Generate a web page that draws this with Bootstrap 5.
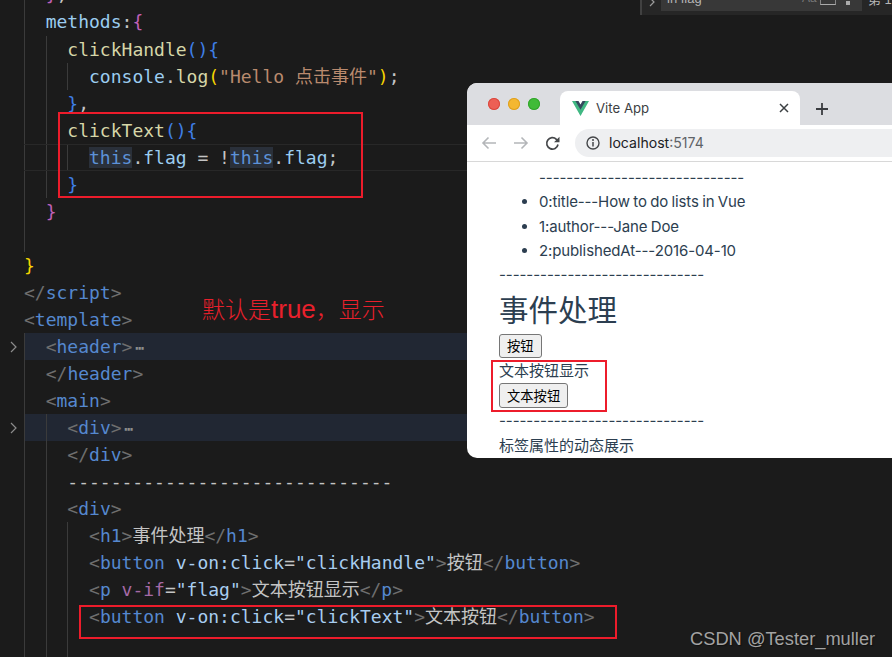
<!DOCTYPE html>
<html lang="zh">
<head>
<meta charset="utf-8">
<title>Vite App</title>
<link href="https://cdn.jsdelivr.net/npm/bootstrap@5.3.0/dist/css/bootstrap.min.css" rel="stylesheet">
<style>
html,body{height:657px;overflow:hidden;background:#1b1b1b;}
.editor{margin-top:-18.6px;font:18px/27.05px "DejaVu Sans Mono","Noto Sans CJK SC",monospace;color:#c4c4c4;}
.ln{height:27.05px;white-space:pre;}
.gut{width:24px;flex:none;}
.gut svg{display:block;margin:8px 0 0 10px;}
.cd{flex:1 1 auto;--g:#3b3b3b;}
.g1{background:linear-gradient(var(--g),var(--g)) 0 0/1px 100% no-repeat;}
.g2{background:linear-gradient(var(--g),var(--g)) 0 0/1px 100% no-repeat,linear-gradient(var(--g),var(--g)) 22px 0/1px 100% no-repeat;}
.g3{background:linear-gradient(var(--g),var(--g)) 0 0/1px 100% no-repeat,linear-gradient(var(--g),var(--g)) 22px 0/1px 100% no-repeat,linear-gradient(var(--g),var(--g)) 43px 0/1px 100% no-repeat;}
.fold{background-color:#212733;}
.cur{box-shadow:inset 0 1px 0 #282828,inset 0 -1px 0 #282828;}
.k{color:#9bcdf0}.f{color:#d6d6a8}.bb{color:#3f7fe6}.pk{color:#c060b8}.yl{color:#f5d400}
.st{color:#b98a6e}.tg{color:#5588cf}.br{color:#6e6e6e}.at{color:#a8cdf0}.vi{color:#a66aa6}
.hl{background:#2a303a;color:#5d92d8;}
.dots{color:#8c8c8c;font-size:15px;font-weight:700;margin-left:3px;}
.note{left:202px;top:292px;color:#e8202c;font:300 23px/34px "Liberation Sans","Noto Sans CJK SC",sans-serif;white-space:pre;}
.note span{font-size:26px;}
.rbox{border:2px solid #ed1c2b;}
.r1{left:58px;top:112px;width:305px;height:86px;}
.r2{left:79px;top:605px;width:538px;height:34px;}
.r3{left:491px;top:360px;width:116px;height:52px;z-index:5;}
.mark-wm{left:690px;top:628px;color:#a3a3a3;font:18.3px/22px "Liberation Sans",sans-serif;text-shadow:1px 1px 1px #0006;}
.findw{left:640px;top:0;width:252px;height:15px;background:#262626;border-left:2px solid #414141;color:#9a9a9a;font:12px/12px "Liberation Sans","Noto Sans CJK SC",sans-serif;}
.findin{left:19px;top:0;width:201px;height:11px;background:#383838;}
.findtx{left:6px;top:-7px;font-size:13px;color:#b5b5b5;white-space:pre;}
.fa{left:141px;top:-8px;color:#777;}
.fb{left:159px;top:0;width:16px;height:5px;border-bottom:1px solid #aaa;border-left:1px solid #888;border-right:1px solid #888;}
.fc{left:185px;top:1px;width:4px;height:4px;background:#aaa;}
.fd{left:226px;top:-6px;font-size:13px;color:#b5b5b5;white-space:pre;}
.fchev{left:7px;top:-3px;}
.win{left:467px;top:83px;width:425px;height:375px;background:#fff;border-radius:10px 0 0 10px;}
.tbar{height:42px;background:#dcdde1;padding:8px 0 0 21px;}
.lamp{width:12px;height:12px;border-radius:50%;margin:7px 8px 0 0;}
.l1{background:#ed5f55;box-shadow:inset 0 0 0 1px #d9493f;}
.l2{background:#f4b731;box-shadow:inset 0 0 0 1px #dea021;}
.l3{background:#40bb38;box-shadow:inset 0 0 0 1px #33a52c;}
.tabx{width:240px;height:34px;margin-left:12px;background:#fff;border-radius:8px 8px 0 0;padding:0 11px 0 12px;font:13.2px/34px "Inter","Liberation Sans",sans-serif;color:#3c4043;}
.tabtitle{margin-left:7px;}
.plus{margin-left:15px;margin-top:11px;}
.tool{height:36px;padding:0 0 0 14px;}
.nav1{margin-right:16px;}
.nav3{margin-right:15px;}
.omni{height:28px;background:#eeeff1;border-radius:14px 0 0 14px;padding-left:11px;font:14.1px/28px "Inter","Liberation Sans",sans-serif;color:#202124;}
.omni span{color:#5f6368;}
.omni svg{margin-right:9px;}
.pagew{border-top:1px solid #d8d8d8;padding:4px 0 0 32px;font:15px/24.3px "Inter","Noto Sans CJK SC",sans-serif;color:#2c3e50;height:297px;}
.dashx{letter-spacing:-.06px;}
.rows{padding-left:40px;}
.rows ul{margin:0;padding-left:0;letter-spacing:-.12px;word-spacing:-.7px;}
.h1x{font:400 29.5px/47px "Inter","Noto Sans CJK SC",sans-serif;margin:0;color:#2c3e50;}
.natbtn{display:block;background:#efefef;border:1px solid #767676;border-radius:3px;color:#000;font:13.3px/16px "Inter","Noto Sans CJK SC",sans-serif;padding:3px 7px;height:24px;}
.natbtn2{height:25px;margin-bottom:1px;}
.txt1{height:25px;line-height:26px;}
</style>
</head>
<body class="m-0 position-relative">
<div class="editor">
<div class="ln d-flex"><span class="gut"></span><span class="cd g1">  <span class="pk">}</span>,</span></div>
<div class="ln d-flex"><span class="gut"></span><span class="cd g1">  <span class="k">methods</span>:<span class="pk">{</span></span></div>
<div class="ln d-flex"><span class="gut"></span><span class="cd g2">    <span class="f">clickHandle</span><span class="bb">(){</span></span></div>
<div class="ln d-flex"><span class="gut"></span><span class="cd g3">      <span class="k">console</span>.<span class="f">log</span><span class="yl">(</span><span class="st">"Hello 点击事件"</span><span class="yl">)</span>;</span></div>
<div class="ln d-flex"><span class="gut"></span><span class="cd g2">    <span class="bb">}</span>,</span></div>
<div class="ln d-flex"><span class="gut"></span><span class="cd g2">    <span class="f">clickText</span><span class="bb">(){</span></span></div>
<div class="ln d-flex"><span class="gut"></span><span class="cd g3 cur">      <span class="hl">this</span>.<span class="k">flag</span> = !<span class="hl">this</span>.<span class="k">flag</span>;</span></div>
<div class="ln d-flex"><span class="gut"></span><span class="cd g2">    <span class="bb">}</span></span></div>
<div class="ln d-flex"><span class="gut"></span><span class="cd g1">  <span class="pk">}</span></span></div>
<div class="ln d-flex"><span class="gut"></span><span class="cd g1"> </span></div>
<div class="ln d-flex"><span class="gut"></span><span class="cd"><span class="yl">}</span></span></div>
<div class="ln d-flex"><span class="gut"></span><span class="cd"><span class="br">&lt;/</span><span class="tg">script</span><span class="br">&gt;</span></span></div>
<div class="ln d-flex"><span class="gut"></span><span class="cd"><span class="br">&lt;</span><span class="tg">template</span><span class="br">&gt;</span></span></div>
<div class="ln d-flex"><span class="gut"><svg width="7" height="12" viewBox="0 0 7 12"><path d="M1 1l5 5-5 5" fill="none" stroke="#8c8c8c" stroke-width="1.2"/></svg></span><span class="cd g1 fold">  <span class="br">&lt;</span><span class="tg">header</span><span class="br">&gt;</span><span class="dots">⋯</span></span></div>
<div class="ln d-flex"><span class="gut"></span><span class="cd g1">  <span class="br">&lt;/</span><span class="tg">header</span><span class="br">&gt;</span></span></div>
<div class="ln d-flex"><span class="gut"></span><span class="cd g1">  <span class="br">&lt;</span><span class="tg">main</span><span class="br">&gt;</span></span></div>
<div class="ln d-flex"><span class="gut"><svg width="7" height="12" viewBox="0 0 7 12"><path d="M1 1l5 5-5 5" fill="none" stroke="#8c8c8c" stroke-width="1.2"/></svg></span><span class="cd g2 fold">    <span class="br">&lt;</span><span class="tg">div</span><span class="br">&gt;</span><span class="dots">⋯</span></span></div>
<div class="ln d-flex"><span class="gut"></span><span class="cd g2">    <span class="br">&lt;/</span><span class="tg">div</span><span class="br">&gt;</span></span></div>
<div class="ln d-flex"><span class="gut"></span><span class="cd g2">    ------------------------------</span></div>
<div class="ln d-flex"><span class="gut"></span><span class="cd g2">    <span class="br">&lt;</span><span class="tg">div</span><span class="br">&gt;</span></span></div>
<div class="ln d-flex"><span class="gut"></span><span class="cd g3">      <span class="br">&lt;</span><span class="tg">h1</span><span class="br">&gt;</span>事件处理<span class="br">&lt;/</span><span class="tg">h1</span><span class="br">&gt;</span></span></div>
<div class="ln d-flex"><span class="gut"></span><span class="cd g3">      <span class="br">&lt;</span><span class="tg">button</span> <span class="at">v-on:click</span>=<span class="at">"clickHandle"</span><span class="br">&gt;</span>按钮<span class="br">&lt;/</span><span class="tg">button</span><span class="br">&gt;</span></span></div>
<div class="ln d-flex"><span class="gut"></span><span class="cd g3">      <span class="br">&lt;</span><span class="tg">p</span> <span class="vi">v-if</span>=<span class="at">"flag"</span><span class="br">&gt;</span>文本按钮显示<span class="br">&lt;/</span><span class="tg">p</span><span class="br">&gt;</span></span></div>
<div class="ln d-flex"><span class="gut"></span><span class="cd g3">      <span class="br">&lt;</span><span class="tg">button</span> <span class="at">v-on:click</span>=<span class="at">"clickText"</span><span class="br">&gt;</span>文本按钮<span class="br">&lt;/</span><span class="tg">button</span><span class="br">&gt;</span></span></div>
<div class="ln d-flex"><span class="gut"></span><span class="cd g3"> </span></div>
</div>

<div class="findw position-absolute overflow-hidden">
  <svg class="fchev position-absolute" width="7" height="10" viewBox="0 0 7 10"><path d="M1 1l4 4-4 4" fill="none" stroke="#9a9a9a" stroke-width="1.2"/></svg>
  <div class="findin position-absolute overflow-hidden">
    <span class="findtx position-absolute">in flag</span>
    <span class="fa position-absolute">Aa</span>
    <span class="fb position-absolute"></span>
    <span class="fc position-absolute"></span>
  </div>
  <span class="fd position-absolute">第 1</span>
</div>

<div class="note position-absolute">默认是<span>true</span>，显示</div>
<div class="rbox r1 position-absolute"></div>
<div class="rbox r2 position-absolute"></div>
<div class="rbox r3 position-absolute"></div>

<div class="win position-absolute overflow-hidden">
  <div class="tbar d-flex align-items-start">
    <span class="lamp l1"></span><span class="lamp l2"></span><span class="lamp l3"></span>
    <div class="tabx d-flex align-items-center">
      <svg width="17" height="15" viewBox="0 0 17 15"><path d="M0 0h4.2l4.3 7.4L12.8 0H17L8.5 15z" fill="#41b883"/><path d="M3.4 0h3.1l2 3.4L10.5 0h3.1L8.5 8.8z" fill="#35495e"/></svg>
      <span class="tabtitle flex-grow-1">Vite App</span>
      <svg width="10" height="10" viewBox="0 0 10 10"><path d="M1 1l8 8M9 1l-8 8" stroke="#3c4043" stroke-width="1.5"/></svg>
    </div>
    <svg class="plus" width="14" height="14" viewBox="0 0 14 14"><path d="M7 1v12M1 7h12" stroke="#3a3c40" stroke-width="1.8"/></svg>
  </div>
  <div class="tool d-flex align-items-center">
    <svg class="nav1" width="16" height="14" viewBox="0 0 16 14"><path d="M15 7H2M7.5 1.5L2 7l5.500 5.500" fill="none" stroke="#b4b6b9" stroke-width="1.6"/></svg>
    <svg class="nav1" width="16" height="14" viewBox="0 0 16 14"><path d="M1 7h13M8.500 1.500L14 7l-5.500 5.500" fill="none" stroke="#b4b6b9" stroke-width="1.6"/></svg>
    <svg class="nav3" width="15" height="15" viewBox="0 0 15 15"><path d="M13 8.500A5.700 5.700 0 1 1 11.400 3.300L13.500 5.300" fill="none" stroke="#45474a" stroke-width="1.700"/><path d="M14.500 0.800V6.300H9z" fill="#45474a"/></svg>
    <div class="omni flex-grow-1 d-flex align-items-center">
      <svg width="14" height="14" viewBox="0 0 14 14"><circle cx="7" cy="7" r="6" fill="none" stroke="#45474a" stroke-width="1.400"/><path d="M7 6v4.500" stroke="#45474a" stroke-width="1.500"/><circle cx="7" cy="4" r="1" fill="#45474a"/></svg>
      localhost<span>:5174</span>
    </div>
  </div>
  <div class="pagew">
    <div class="rows">
      <div class="dashx">------------------------------</div>
      <ul>
        <li>0:title---How to do lists in Vue</li>
        <li>1:author---Jane Doe</li>
        <li>2:publishedAt---2016-04-10</li>
      </ul>
    </div>
    <div class="dashx">------------------------------</div>
    <h1 class="h1x">事件处理</h1>
    <button class="natbtn" type="button">按钮</button>
    <p class="m-0 txt1">文本按钮显示</p>
    <button class="natbtn natbtn2" type="button">文本按钮</button>
    <div class="dashx">------------------------------</div>
    <div>标签属性的动态展示</div>
  </div>
</div>

<div class="mark-wm position-absolute">CSDN @Tester_muller</div>
</body>
</html>
